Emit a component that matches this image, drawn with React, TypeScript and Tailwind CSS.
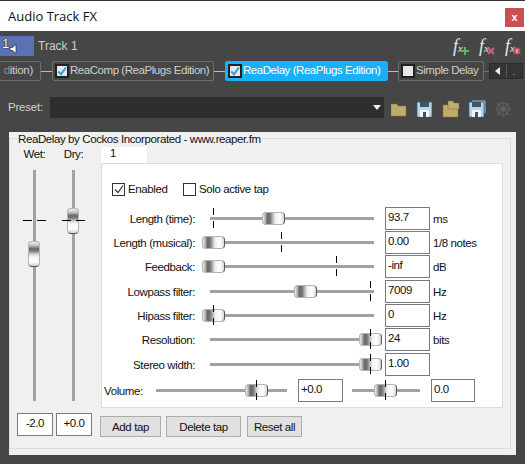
import React from "react";

const sans = "font-['Liberation_Sans',Arial,sans-serif]";

function Check({ on, className = "" }: { on?: boolean; className?: string }) {
  return (
    <span className={`flex h-[14px] w-[14px] shrink-0 items-center justify-center border-2 border-[#222] bg-[#e8e8e8] ${className}`}>
      {on && (
        <svg viewBox="0 0 10 10" className="h-[10px] w-[10px]">
          <path d="M1.2 5.5 L4 8.2 L9 1.5" fill="none" stroke="#2aa3dd" strokeWidth="2" />
        </svg>
      )}
    </span>
  );
}

function Pill({ label, on, active, w }: { label: string; on?: boolean; active?: boolean; w: string }) {
  return (
    <div
      className={`flex h-[20px] shrink-0 items-center gap-[1px] rounded-[2px] border pl-[2px] text-[11.5px] tracking-[-0.45px] ${w} ${
        active ? "border-[#1ab0f8] bg-[#1ab0f8] text-white" : "border-[#6e6e6e] text-[#cfcfcf]"
      }`}
    >
      <Check on={on} />
      <span className="whitespace-nowrap">{label}</span>
    </div>
  );
}

const Link = ({ w, dim }: { w: string; dim?: boolean }) => <div className={`h-[1px] shrink-0 ${w} ${dim ? "bg-[#6e6e6e]" : "bg-[#bdbdbd]"}`} />;

function Fx({ badge }: { badge: React.ReactNode }) {
  return (
    <span className="relative h-[17px] w-[15px] font-['Liberation_Serif',serif] text-[18px] leading-[16px] text-[#e8e8e8] italic">
      f<span className="text-[11px]">x</span>
      <span className="absolute -right-[1px] bottom-0">{badge}</span>
    </span>
  );
}

function HSlider({ w, thumb, tick }: { w: string; thumb: number; tick: number }) {
  return (
    <div className={`relative h-[20px] shrink-0 ${w}`}>
      <div className="absolute top-[9px] right-[8px] left-[8px] h-[3px] bg-[#a2a2a2]" />
      <div
        className="absolute top-[4px] h-[13px] w-[23px] rounded-[4px] border border-[#b4b4b4] border-r-[#555] bg-[linear-gradient(90deg,#f0f0f0_0%,#b8b8b8_10%,#666_22%,#7a7a7a_35%,#c0c0c0_48%,#f0f0f0_58%,#fff_80%,#d8d8d8_100%)]"
        style={{ left: thumb }}
      />
      <div className="absolute top-0 h-[7px] w-[1px] bg-black" style={{ left: tick }} />
      <div className="absolute top-[13px] h-[7px] w-[1px] bg-black" style={{ left: tick }} />
    </div>
  );
}

function VSlider({ label, thumb }: { label: string; thumb: number }) {
  return (
    <div className="flex w-[23px] flex-col items-center">
      <div className="h-[14px] leading-[14px] whitespace-nowrap">{label}</div>
      <div className="relative mt-[9px] h-[231px] w-[23px]">
        <div className="absolute top-0 bottom-0 left-[10px] w-[3px] bg-[#a2a2a2]" />
        <div
          className="absolute left-[5px] h-[26px] w-[12px] rounded-[4px] border border-[#b4b4b4] border-b-[#555] bg-[linear-gradient(180deg,#f0f0f0_0%,#c4c4c4_14%,#666_28%,#7e7e7e_38%,#d0d0d0_50%,#f6f6f6_62%,#fff_82%,#cfcfcf_100%)]"
          style={{ top: thumb }}
        />
        <div className="absolute top-[50px] left-0 h-[1px] w-[9px] bg-black" />
        <div className="absolute top-[50px] left-[14px] h-[1px] w-[9px] bg-black" />
      </div>
    </div>
  );
}

function Box({ v, w = "w-[45px]", center }: { v: string; w?: string; center?: boolean }) {
  return (
    <div className={`h-[23px] shrink-0 border border-[#7a7a7a] bg-white px-[2px] pt-[1px] leading-[16px] ${w} ${center ? "text-center" : ""}`}>
      {v}
    </div>
  );
}

function Btn({ label, w }: { label: string; w: string }) {
  return <div className={`flex h-[21px] shrink-0 items-center justify-center border border-[#adadad] bg-[#e1e1e1] ${w}`}>{label}</div>;
}

const rows = [
  { label: "Length (time):", v: "93.7", unit: "ms", thumb: 60, tick: 11, h: "h-[24px]" },
  { label: "Length (musical):", v: "0.00", unit: "1/8 notes", thumb: 0, tick: 79, h: "h-[24px]" },
  { label: "Feedback:", v: "-inf", unit: "dB", thumb: 0, tick: 134, h: "h-[25px]" },
  { label: "Lowpass filter:", v: "7009", unit: "Hz", thumb: 92, tick: 168, h: "h-[24px]" },
  { label: "Hipass filter:", v: "0", unit: "Hz", thumb: 0, tick: 11, h: "h-[24px]" },
  { label: "Resolution:", v: "24", unit: "bits", thumb: 157, tick: 168, h: "h-[25px]" },
  { label: "Stereo width:", v: "1.00", unit: "", thumb: 157, tick: 168, h: "h-[26px]" },
];

function Folder({ x = 0, y = 0 }: { x?: number; y?: number }) {
  return <path transform={`translate(${x} ${y})`} d="M0 1h6l1 2h8v10H0z" fill="#bead6a" stroke="#7d7140" strokeWidth="0.5" />;
}

function Floppy({ x = 0, y = 0 }: { x?: number; y?: number }) {
  return (
    <g transform={`translate(${x} ${y})`}>
      <path d="M0 0h15v15H0z" fill="#b5d6ea" stroke="#3d5668" strokeWidth="0.7" />
      <path d="M3 0h9v5H3z" fill="#3d5668" />
      <path d="M3 8h9v7H3z" fill="#f4f4f4" />
      <path d="M6 10h3v5H6z" fill="#3d5668" />
    </g>
  );
}

export default function App() {
  return (
    <div className={`flex h-[464px] w-[525px] flex-col overflow-hidden border-t border-[#333] bg-[#464646] ${sans}`}>
      <div className="flex h-[30px] shrink-0 items-center justify-between bg-white pr-[1px] pl-[8px]">
        <span className="mt-[1px] font-['Open_Sans',sans-serif] text-[13px] text-[#111]">Audio Track FX</span>
        <span className="mt-[3px] flex h-[19px] w-[19px] items-center justify-center bg-[#c75050] text-[11px] leading-none font-bold text-white">x</span>
      </div>

      <div className="mt-[5px] flex h-[20px] shrink-0 items-center">
        <div className="relative h-[20px] w-[34px] bg-[#5872b4]">
          <span className="absolute top-[1px] left-[2px] text-[13px] leading-[14px] text-white [text-shadow:0_0_1px_#000,0_0_1px_#000]">1</span>
          <svg viewBox="0 0 8 10" className="absolute top-[8px] left-[9px] h-[10px] w-[8px]">
            <path d="M7 0.5v9L3.5 6.5H1v-3h2.5z" fill="#fff" stroke="#222" strokeWidth="0.7" />
          </svg>
        </div>
        <span className="ml-[4px] text-[12px] text-[#cfcfcf]">Track 1</span>
        <div className="mr-[5px] ml-auto flex gap-[11px]">
          <Fx badge={<svg viewBox="0 0 8 8" className="block h-[8px] w-[8px]"><path d="M3 0h2v3h3v2H5v3H3V5H0V3h3z" fill="#62b35f" /></svg>} />
          <Fx badge={<svg viewBox="0 0 8 8" className="block h-[8px] w-[8px]"><path d="M1 1l6 6M7 1L1 7" stroke="#d0607a" strokeWidth="2" /></svg>} />
          <Fx badge={<svg viewBox="0 0 8 8" className="block h-[8px] w-[8px]"><circle cx="4" cy="4" r="3.5" fill="#b9535c" /><path d="M4 2v4" stroke="#eee" /></svg>} />
        </div>
      </div>

      <div className="mt-[5px] flex h-[20px] shrink-0 items-center">
        <div className="flex h-[20px] w-[41px] shrink-0 items-center justify-end overflow-hidden rounded-r-[2px] border border-l-0 border-[#6e6e6e] pr-[7px] text-[11.5px] tracking-[-0.3px] text-[#cfcfcf]">
          <span className="whitespace-nowrap"><span className="text-[#8a8a8a]">d</span>ition)</span>
        </div>
        <Link w="w-[11px]" />
        <Pill label="ReaComp (ReaPlugs Edition)" on w="w-[162px]" />
        <Link w="w-[11px]" />
        <Pill label="ReaDelay (ReaPlugs Edition)" on active w="w-[163px]" />
        <Link w="w-[10px]" />
        <Pill label="Simple Delay" w="w-[86px]" />
        <Link w="w-[5px]" dim />
        <div className="flex h-[16px] w-[34px] shrink-0 border border-[#2a2a2a] bg-[#353535]">
          <span className="flex w-[17px] items-center justify-center border-r border-[#555]">
            <svg viewBox="0 0 5 8" className="h-[8px] w-[5px]"><path d="M5 0v8L0 4z" fill="#eee" /></svg>
          </span>
          <span className="flex w-[16px] items-end justify-center pb-[3px]"><span className="h-[1px] w-[2px] bg-[#666]" /></span>
        </div>
      </div>

      <div className="mt-[16px] flex h-[21px] shrink-0 items-center">
        <span className="w-[50px] pl-[8px] text-[11.5px] tracking-[-0.2px] text-[#cfcfcf]">Preset:</span>
        <div className="flex h-[21px] w-[334px] items-center justify-end bg-[#2e2e2e] pr-[3px]">
          <svg viewBox="0 0 8 5" className="h-[5px] w-[8px]"><path d="M0 0h8L4 5z" fill="#eee" /></svg>
        </div>
        <svg viewBox="0 0 127 21" className="ml-[7px] h-[21px] w-[127px]">
          <Folder y={6} />
          <Floppy x={26} y={5} />
          <Folder x={52} y={7} />
          <path transform="translate(57 3)" d="M0 1h5l1 2h5v6H0z" fill="#bead6a" stroke="#7d7140" strokeWidth="0.5" />
          <Floppy x={78} y={5} />
          <path d="M81 4h13v12" fill="none" stroke="#9cc0d6" />
          <g stroke="#5f5f5f" strokeWidth="1.2" fill="none">
            <circle cx="112" cy="12" r="6" />
            <path d="M106 6l12 12M118 6L106 18M112 4v16M104 12h16" />
          </g>
        </svg>
      </div>

      <div className="mt-[14px] ml-[9px] flex h-[323px] w-[507px] shrink-0 flex-col bg-[#f0f0f0] pt-[6px] pr-[5px] pb-[6px] text-[11.5px] leading-[14px] tracking-[-0.4px] text-[#111]">
        <div className="relative flex h-full border border-[#dcdcdc]">
          <span className="absolute -top-[7px] left-[7px] bg-[#f0f0f0] px-[1px] whitespace-nowrap">ReaDelay by Cockos Incorporated - www.reaper.fm</span>
          <div className="flex w-[91px] shrink-0 flex-col pt-[8px]">
            <div className="ml-[13px] flex gap-[16px]">
              <VSlider label="Wet:" thumb={71} />
              <VSlider label="Dry:" thumb={38} />
            </div>
            <div className="mt-[12px] ml-[7px] flex gap-[3px]">
              <Box v="-2.0" w="w-[36px]" center />
              <Box v="+0.0" w="w-[36px]" center />
            </div>
          </div>
          <div className="flex w-[402px] shrink-0 flex-col pt-[8px]">
            <div className="h-[17px] w-[46px] bg-white pl-[9px] leading-[13px]">1</div>
            <div className="-mt-[1px] h-[245px] border border-[#dcdcdc] bg-white">
              <div className="mt-[18px] flex h-[14px] items-center pl-[10px]">
                <label className="flex w-[71px] items-center gap-[3px]">
                  <span className="flex h-[13px] w-[13px] items-center justify-center border border-[#333]">
                    <svg viewBox="0 0 10 10" className="h-[10px] w-[10px]"><path d="M1 5.5L4 8.5 9 1.5" fill="none" stroke="#333" strokeWidth="1.2" /></svg>
                  </span>
                  Enabled
                </label>
                <label className="flex items-center gap-[3px]">
                  <span className="h-[13px] w-[13px] border border-[#333]" />
                  Solo active tap
                </label>
              </div>
              <div className="mt-[11px] flex flex-col">
                {rows.map((r) => (
                  <div key={r.label} className={`flex items-start ${r.h}`}>
                    <span className="mt-[5px] w-[93px] shrink-0 pr-[0px] text-right whitespace-nowrap">{r.label}</span>
                    <div className="mt-[1px] ml-[7px]"><HSlider w="w-[180px]" thumb={r.thumb} tick={r.tick} /></div>
                    <div className="ml-[3px]"><Box v={r.v} /></div>
                    <span className="mt-[5px] ml-[3px] whitespace-nowrap">{r.unit}</span>
                  </div>
                ))}
                <div className="flex items-start">
                  <span className="mt-[5px] ml-[2px] w-[44px] shrink-0">Volume:</span>
                  <div className="mt-[1px]"><HSlider w="w-[147px]" thumb={97} tick={108} /></div>
                  <div className="ml-[3px]"><Box v="+0.0" /></div>
                  <div className="mt-[1px] ml-[1px]"><HSlider w="w-[84px]" thumb={30} tick={41} /></div>
                  <div className="ml-[3px]"><Box v="0.0" w="w-[44px]" /></div>
                </div>
              </div>
            </div>
            <div className="mt-[8px] -ml-[1px] flex gap-[5px]">
              <Btn label="Add tap" w="w-[61px]" />
              <Btn label="Delete tap" w="w-[75px]" />
              <div className="ml-[1px]"><Btn label="Reset all" w="w-[55px]" /></div>
            </div>
          </div>
        </div>
      </div>
    </div>
  );
}
